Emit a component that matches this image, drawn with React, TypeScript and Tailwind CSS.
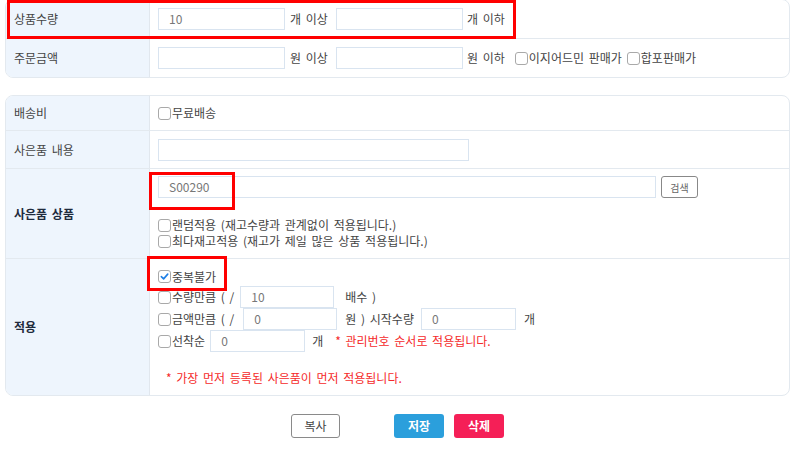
import React from 'react';

const font = { fontFamily: '"Noto Sans CJK KR", "Noto Sans", sans-serif' };

const Check: React.FC<{ checked?: boolean }> = ({ checked }) => (
  <span className="inline-flex items-center justify-center w-[13px] h-[13px] shrink-0 border border-[#a9a9a9] rounded-[3px] bg-white mr-[1px]">
    {checked && (
      <svg width="9" height="9" viewBox="0 0 10 10">
        <path d="M1.5 5.2 L4 7.6 L8.6 2.4" fill="none" stroke="#1e7fe6" strokeWidth="1.8" strokeLinecap="round" strokeLinejoin="round" />
      </svg>
    )}
  </span>
);

const Input: React.FC<{ value?: string; className?: string }> = ({ value = '', className = '' }) => (
  <div className={`h-[22px] border border-[#d9e4f0] bg-white flex items-center pl-[10px] text-[12px] text-[#777] ${className}`}>
    {value}
  </div>
);

const Label: React.FC<{ children: React.ReactNode; bold?: boolean }> = ({ children, bold }) => (
  <div
    className={`w-[144px] shrink-0 bg-[#eef5fd] border-r border-[#e1e7ee] flex items-center pl-[8px] text-[12px] ${
      bold ? 'font-bold text-[#1f2b3d]' : 'text-[#444]'
    }`}
  >
    {children}
  </div>
);

export default function App() {
  return (
    <div className="relative w-[800px] h-[450px] bg-white overflow-hidden text-[#444] [word-spacing:2px]" style={font}>
      {/* Card 1 */}
      <div className="ml-[5px] mr-[10px] -mt-[1px] border border-[#e3e9ef] rounded-[8px] overflow-hidden">
        <div className="flex h-[39px] border-b border-[#e3e9ef]">
          <Label>상품수량</Label>
          <div className="flex items-center pl-[8px] text-[12px]">
            <Input value="10" className="w-[127px]" />
            <span className="ml-[5px] w-[46px]">개 이상</span>
            <Input className="w-[127px]" />
            <span className="ml-[4px]">개 이하</span>
          </div>
        </div>
        <div className="flex h-[38px]">
          <Label>주문금액</Label>
          <div className="flex items-center pl-[8px] text-[12px]">
            <Input className="w-[127px]" />
            <span className="ml-[5px] w-[46px]">원 이상</span>
            <Input className="w-[127px]" />
            <span className="ml-[4px]">원 이하</span>
            <span className="ml-[10px] flex items-center"><Check />이지어드민 판매가</span>
            <span className="ml-[5px] flex items-center"><Check />합포판매가</span>
          </div>
        </div>
      </div>

      {/* Card 2 */}
      <div className="ml-[5px] mr-[10px] mt-[17px] border border-[#e3e9ef] rounded-[8px] overflow-hidden">
        <div className="flex h-[35px] border-b border-[#e3e9ef]">
          <Label>배송비</Label>
          <div className="flex items-center pl-[8px] text-[12px]">
            <Check />무료배송
          </div>
        </div>
        <div className="flex h-[38px] border-b border-[#e3e9ef]">
          <Label>사은품 내용</Label>
          <div className="flex items-center pl-[8px]">
            <Input className="w-[311px]" />
          </div>
        </div>
        <div className="flex h-[90px] border-b border-[#e3e9ef]">
          <Label bold>사은품 상품</Label>
          <div className="pl-[8px] pt-[7px] text-[12px]">
            <div className="flex items-center">
              <Input value="S00290" className="w-[498px]" />
              <button className="ml-[5px] h-[22px] w-[37px] border border-[#888] rounded-[3px] bg-white text-[10px] text-[#666]">
                검색
              </button>
            </div>
            <div className="mt-[19px] flex items-center h-[16px]">
              <Check />랜덤적용 (재고수량과 관계없이 적용됩니다.)
            </div>
            <div className="flex items-center h-[16px]">
              <Check />최다재고적용 (재고가 제일 많은 상품 적용됩니다.)
            </div>
          </div>
        </div>
        <div className="flex h-[136px]">
          <Label bold>적용</Label>
          <div className="pl-[8px] pt-[8px] text-[12px]">
            <div className="flex items-center h-[19px]">
              <Check checked />중복불가
            </div>
            <div className="flex items-center h-[22px]">
              <Check />수량만큼 ( /
              <Input value="10" className="w-[94px] ml-[6px]" />
              <span className="ml-[11px]">배수 )</span>
            </div>
            <div className="flex items-center h-[22px]">
              <Check />금액만큼 ( /
              <Input value="0" className="w-[94px] ml-[9px]" />
              <span className="ml-[8px]">원 ) 시작수량</span>
              <Input value="0" className="w-[95px] ml-[7px]" />
              <span className="ml-[8px]">개</span>
            </div>
            <div className="flex items-center h-[22px]">
              <Check />선착순
              <Input value="0" className="w-[95px] ml-[5px]" />
              <span className="ml-[7px]">개</span>
              <span className="ml-[12px] text-[#f52a2a]">* 관리번호 순서로 적용됩니다.</span>
            </div>
            <div className="mt-[16px] ml-[8px] h-[20px] flex items-center text-[#f52a2a]">
              * 가장 먼저 등록된 사은품이 먼저 적용됩니다.
            </div>
          </div>
        </div>
      </div>

      {/* Buttons */}
      <div className="mt-[18px] flex justify-center pr-[5px] text-[12px]">
        <button className="w-[49px] h-[24px] border border-[#8a8a8a] rounded-[3px] bg-white text-[#444]">복사</button>
        <button className="ml-[54px] w-[50px] h-[24px] rounded-[3px] bg-[#2b9fdc] text-white font-bold">저장</button>
        <button className="ml-[10px] w-[50px] h-[24px] rounded-[3px] bg-[#f51f57] text-white font-bold">삭제</button>
      </div>

      {/* Red annotation boxes */}
      <div className="absolute left-[7px] top-0 w-[509px] h-[39px] border-[3px] border-[#ff0000]" />
      <div className="absolute left-[149px] top-[172px] w-[86px] h-[38px] border-[3px] border-[#ff0000]" />
      <div className="absolute left-[147px] top-[256px] w-[80px] h-[35px] border-[3px] border-[#ff0000]" />
    </div>
  );
}
